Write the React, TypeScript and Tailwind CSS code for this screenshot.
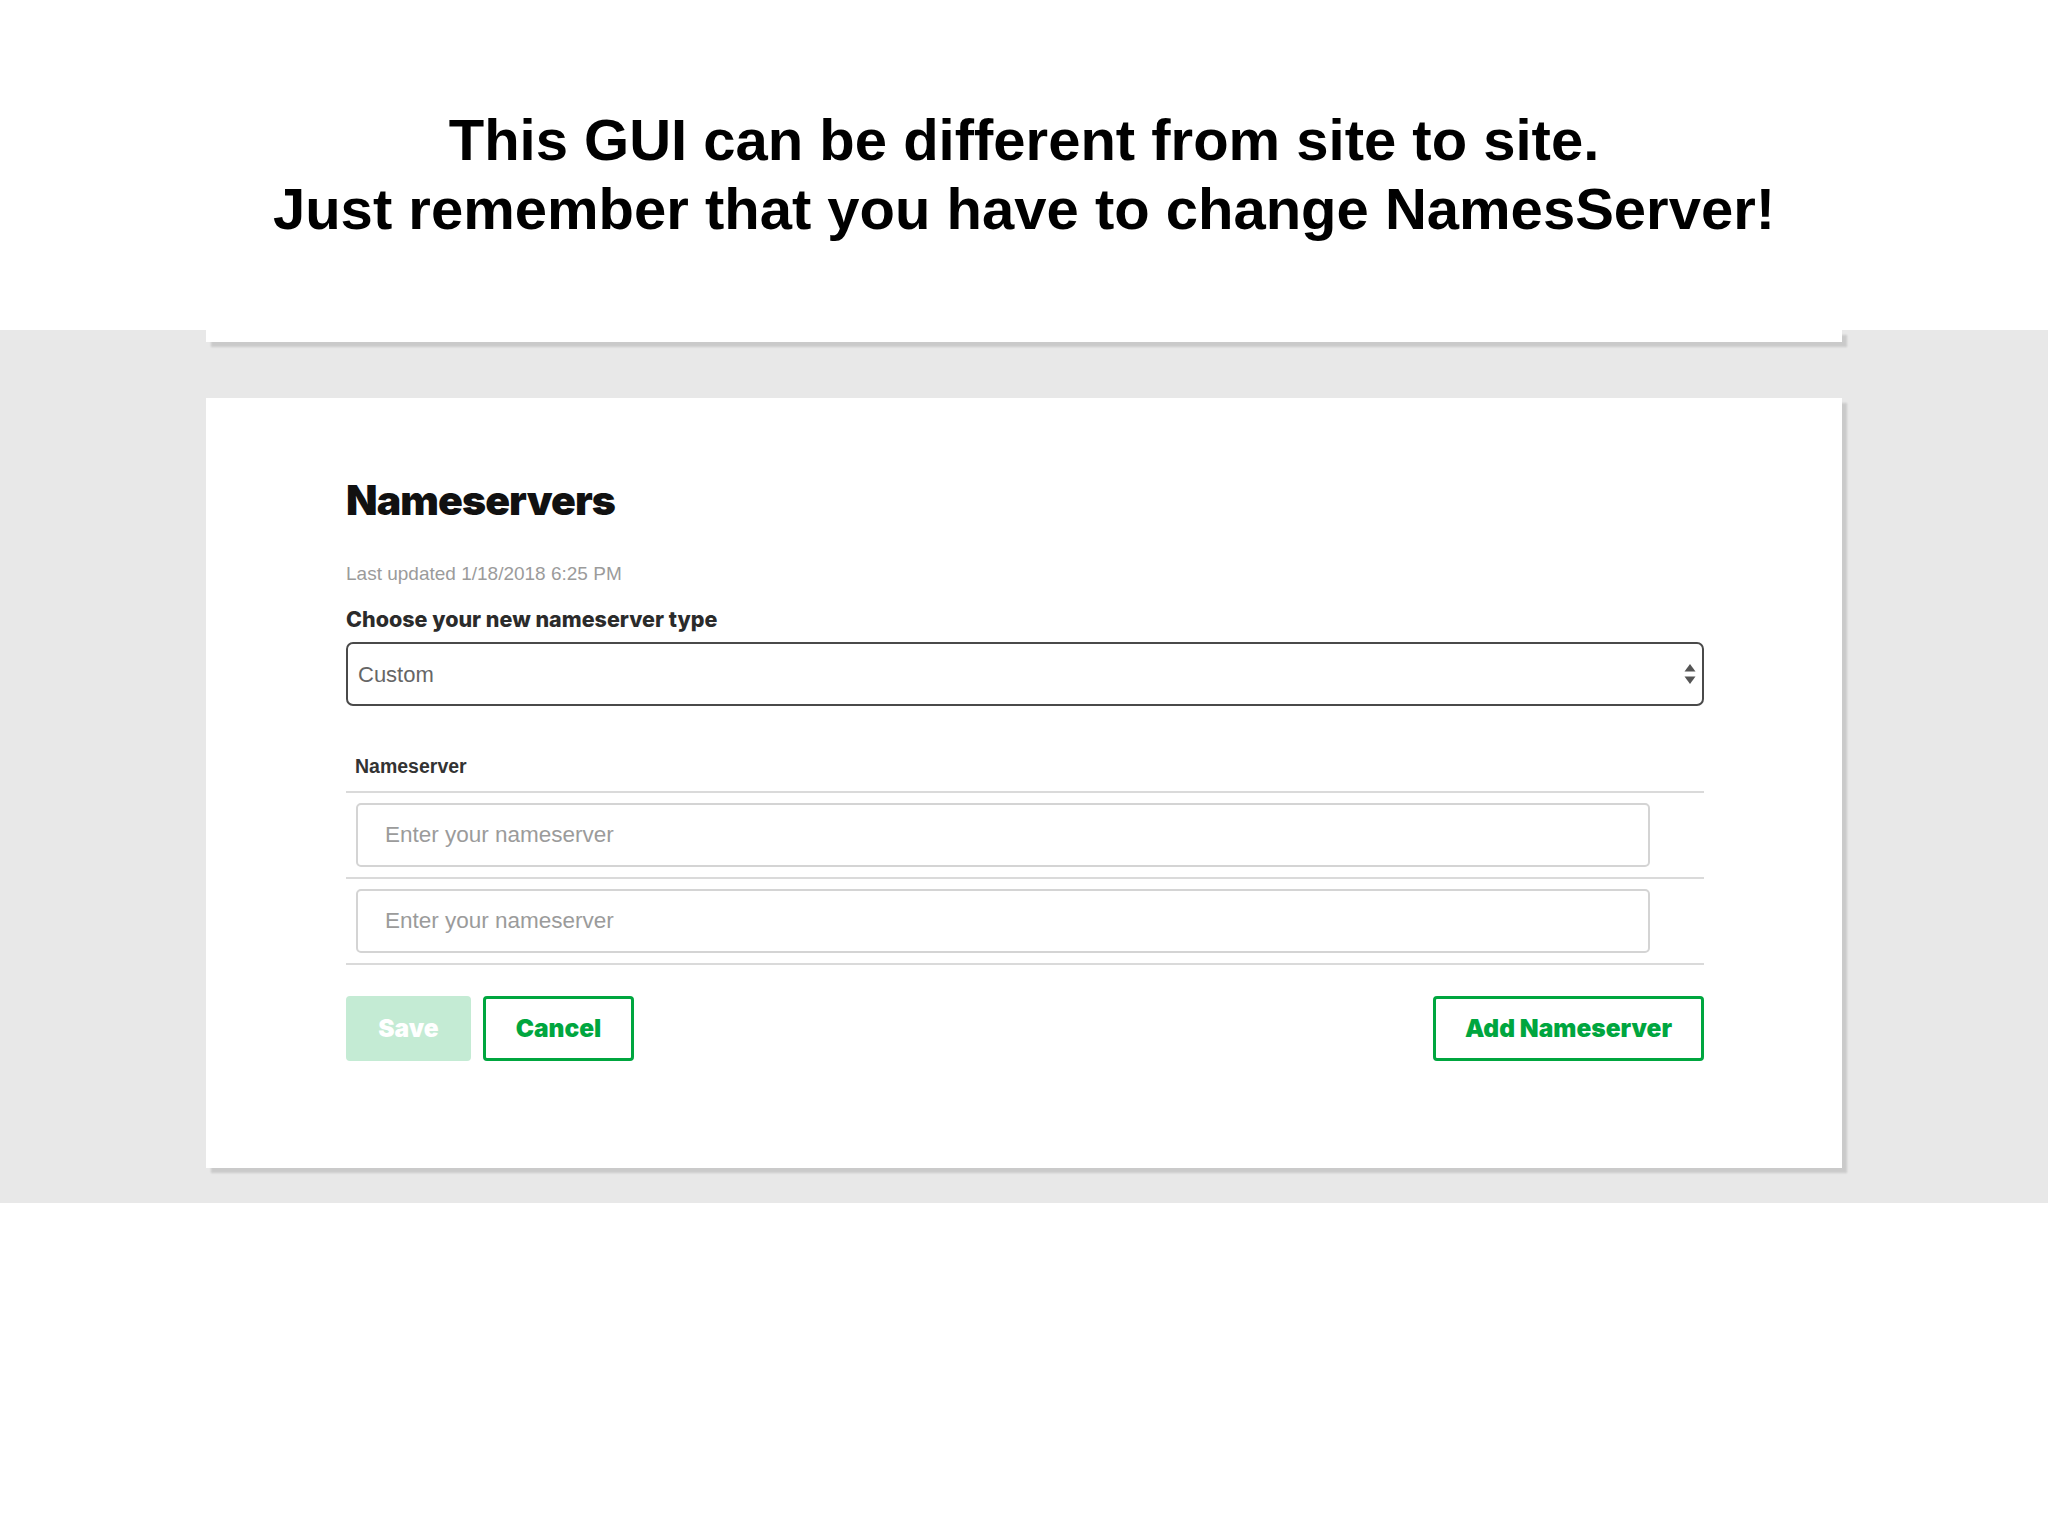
import React from 'react';

const sans = { fontFamily: '"Liberation Sans", Arial, sans-serif' };
const heavy = { fontFamily: 'Inter, Lato, "Noto Sans", sans-serif' };

function SelectArrows() {
  return (
    <svg width="12" height="22" viewBox="0 0 12 22" className="text-[#555]">
      <path d="M6 1 L11.5 8.5 L0.5 8.5 Z" fill="currentColor" />
      <path d="M6 21 L11.5 13.5 L0.5 13.5 Z" fill="currentColor" />
    </svg>
  );
}

function NameserverRow() {
  return (
    <div className="border-b-2 border-[#dadada] pt-[10px] pb-[10px]">
      <div
        className="ml-[10px] flex h-[64px] w-[1294px] items-center rounded-[5px] border-2 border-[#d4d4d4] pl-[27px] text-[22.5px] text-[#9b9b9b]"
        style={sans}
      >
        Enter your nameserver
      </div>
    </div>
  );
}

export default function App() {
  return (
    <div className="min-h-[1536px] w-[2048px] bg-white">
      {/* caption */}
      <div
        className="h-[330px] pt-[105px] text-center text-[58px] font-bold leading-[69px] text-black"
        style={sans}
      >
        <div>This GUI can be different from site to site.</div>
        <div>Just remember that you have to change NamesServer!</div>
      </div>

      <div className="bg-[#e8e8e8] pb-[35px]">
        {/* previous card, only its bottom edge shows */}
        <div className="mx-[206px] h-[12px] bg-white shadow-[5px_5px_2px_rgba(0,0,0,0.13)]" />

        <div className="mx-[206px] mt-[56px] bg-white pl-[140px] pr-[138px] pt-[80px] pb-[107px] shadow-[5px_5px_2px_rgba(0,0,0,0.13)]">
          <h2 className="pt-[1px] text-[41px] font-black leading-[43px] tracking-[-0.9px] text-[#111]" style={heavy}>
            Nameservers
          </h2>

          <div className="mt-[41px] text-[19px] leading-[22px] text-[#9b9b9b]" style={sans}>
            Last updated 1/18/2018 6:25 PM
          </div>

          <div className="mt-[22px] text-[21.5px] font-extrabold leading-[24px] text-[#2b2b2b]" style={heavy}>
            Choose your new nameserver type
          </div>

          <div className="mt-[11px] flex h-[64px] items-center justify-between rounded-[7px] border-2 border-[#4a4a4a] pl-[10px] pr-[6px]">
            <span className="text-[22px] text-[#666]" style={sans}>
              Custom
            </span>
            <SelectArrows />
          </div>

          <div className="mt-[48px] border-b-2 border-[#dadada] pb-[13px] pl-[9px]">
            <div className="text-[19.5px] font-bold leading-[24px] text-[#333]" style={sans}>
              Nameserver
            </div>
          </div>

          <NameserverRow />
          <NameserverRow />

          <div className="mt-[31px] flex items-center justify-between">
            <div className="flex gap-[12px]">
              <button
                className="flex h-[65px] w-[125px] items-center justify-center rounded-[4px] bg-[#c4ebd4] text-[24.5px] font-black text-white"
                style={heavy}
              >
                Save
              </button>
              <button
                className="flex h-[65px] w-[151px] items-center justify-center rounded-[4px] border-[3px] border-[#00a63f] bg-white text-[24.5px] font-black text-[#00a63f]"
                style={heavy}
              >
                Cancel
              </button>
            </div>
            <button
              className="flex h-[65px] w-[271px] items-center justify-center rounded-[4px] border-[3px] border-[#00a63f] bg-white text-[24.5px] font-black text-[#00a63f]"
              style={heavy}
            >
              Add Nameserver
            </button>
          </div>
        </div>
      </div>
    </div>
  );
}
